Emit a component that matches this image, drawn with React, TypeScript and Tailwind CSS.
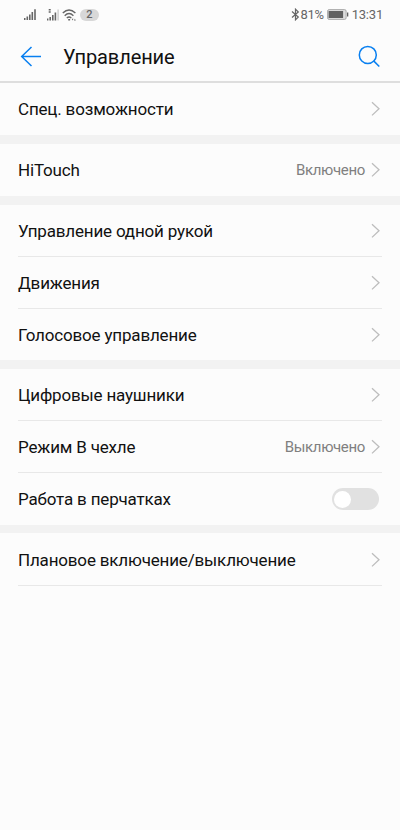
import React from "react";

function Chevron() {
  return (
    <svg className="ml-[6px] mr-px h-[16px] w-[10px] shrink-0" viewBox="0 0 10 16" fill="none" stroke="#bdbdbd" strokeWidth="1.3">
      <path d="M1 1.2 L8 7.8 L1 14.4" />
    </svg>
  );
}

function Toggle() {
  return (
    <span role="switch" aria-checked="false" className="mr-[3px] flex h-[22px] w-[47px] items-center rounded-full bg-[#e1e1e1] pl-[2px]">
      <span className="h-[17px] w-[17px] rounded-full bg-white" />
    </span>
  );
}

type RowProps = { label: string; value?: string; toggle?: boolean; line?: boolean; size?: string };

function Row({ label, value, toggle, line, size = "h-[52px]" }: RowProps) {
  return (
    <div className={`mx-[18px] flex items-center ${size} ${line ? "border-b border-[#e8e8e8]" : ""}`}>
      <span className="flex-1 whitespace-nowrap text-[17px] leading-6 tracking-[-0.175px] text-[#111]">{label}</span>
      {value && <span className="text-[15px] leading-5 tracking-[-0.34px] text-[#808080]">{value}</span>}
      {toggle ? <Toggle /> : <Chevron />}
    </div>
  );
}

function StatusBar() {
  return (
    <div className="flex h-[29px] items-center pl-[23px] pr-[17px] text-[#666]">
      <svg className="h-[13px] w-[14px]" viewBox="0 0 14 13" fill="#666">
        <path d="M1 10h1.500v2H1zM3.500 8.500h1.600V12H3.500zM6 6.500h1.600V12H6zM8.500 4h1.600v8H8.500zM11.200 1.200h1.600V12h-1.600z" />
      </svg>
      <svg className="ml-[9px] h-[14px] w-[14px]" viewBox="0 0 14 14" fill="#666">
        <path d="M1 10.500h1.400v2H1zM3.400 9h1.600v3.500H3.400zM6 7h1.600v5.500H6zM8.600 4.500h1.600v8H8.600zM2.700 1h2v1.600h-2zM2.700 3.200h2v1.600h-2z" />
        <path d="M11.400 1.500h1.400v11h-1.400z" fill="#ccc" />
      </svg>
      <svg className="ml-[2px] h-[14px] w-[15px]" viewBox="0 0 15 14" fill="none" stroke="#666" strokeWidth="1.4">
        <path d="M.8 5Q7-1 13.400 5M2.700 7.700Q7 3.500 11.400 7.700M4.800 10.100Q7.100 8 9.300 10.100" />
        <path d="M6.200 10.900h1.900v1.700H6.200zM9.700 10.800h1.800l-.9 1.700zM12 12.500l.9-1.700.9 1.700z" fill="#666" stroke="none" />
      </svg>
      <span className="ml-[3px] flex h-[12px] w-[19px] items-center justify-center rounded-full bg-[#d8d8d8] text-[11px] font-medium leading-none">2</span>
      <span className="flex-1" />
      <svg className="h-[13px] w-[9px]" viewBox="0 0 9 13" fill="none" stroke="#666" strokeWidth="1.2">
        <path d="M1 3.500 7.300 9 4.500 11.800V1.200L7.300 4 1 9.500" />
      </svg>
      <span className="ml-px text-[13px] leading-none tracking-[-0.35px]">81%</span>
      <svg className="ml-[3px] h-[11px] w-[22px]" viewBox="0 0 22 11">
        <rect x=".6" y=".6" width="18.500" height="9.800" rx="1.500" fill="#ddd" stroke="#aaa" />
        <rect x="1.600" y="2" width="14.500" height="7" fill="#606060" />
        <rect x="20" y="3.500" width="1.300" height="4" fill="#606060" />
      </svg>
      <span className="ml-[3px] text-[13px] leading-none tracking-[-0.2px]">13:31</span>
    </div>
  );
}

function Band({ size = "h-[9px]" }: { size?: string }) {
  return <div className={`bg-[#f2f2f2] ${size}`} />;
}

export default function App() {
  return (
    <main className="h-[830px] w-[400px] overflow-hidden bg-[#fcfcfc] font-['Roboto','Noto_Sans',sans-serif]">
      <StatusBar />
      <header className="flex h-[54px] items-center border-b-2 border-[#dedede] pl-[20px] pr-[20px] pt-px">
        <svg className="h-[22px] w-[22px]" viewBox="0 0 22 22" fill="none" stroke="#087ff0" strokeWidth="1.500">
          <path d="M21 11.500H1.700M11.500 2 1.700 11.500 11.500 21" />
        </svg>
        <h1 className="ml-[21px] flex-1 pt-[2px] text-[20px] leading-6 tracking-[-0.1px] text-[#111]">Управление</h1>
        <svg className="h-[22px] w-[22px]" viewBox="0 0 22 22" fill="none" stroke="#087ff0" strokeWidth="1.500">
          <circle cx="9.800" cy="9.900" r="8.500" />
          <path d="M15.600 15.900 21.300 21.500" />
        </svg>
      </header>
      <Row label="Спец. возможности" />
      <Band />
      <Row label="HiTouch" value="Включено" />
      <Band />
      <Row label="Управление одной рукой" line />
      <Row label="Движения" line />
      <Row label="Голосовое управление" size="h-[51px]" />
      <Band />
      <Row label="Цифровые наушники" line />
      <Row label="Режим В чехле" value="Выключено" line />
      <Row label="Работа в перчатках" toggle />
      <Band size="h-[8px]" />
      <Row label="Плановое включение/выключение" line size="h-[53px] pt-px" />
    </main>
  );
}
